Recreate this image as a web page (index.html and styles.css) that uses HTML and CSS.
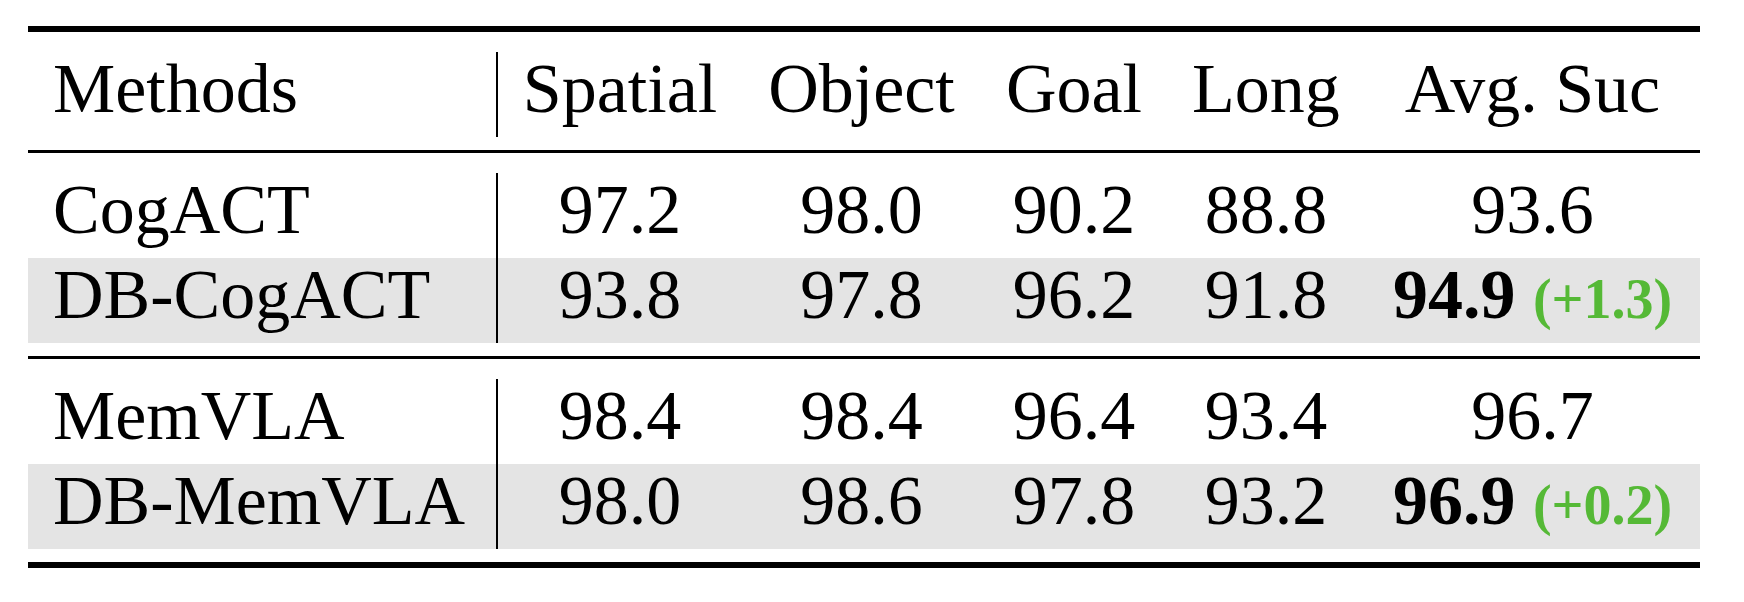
FILE: index.html
```html
<!DOCTYPE html>
<html lang="en">
<head>
    <meta charset="UTF-8">
    <title>Results</title>
    <link rel="stylesheet" href="styles.css">
</head>
<body>
    <div class="results">
        <div class="rule heavy"></div>
        <div class="head">
            <div class="row">
                <span class="name">Methods</span>
                <span>Spatial</span>
                <span>Object</span>
                <span>Goal</span>
                <span>Long</span>
                <span>Avg. Suc</span>
            </div>
        </div>
        <div class="rule"></div>
        <div class="group">
            <div class="row">
                <span class="name">CogACT</span>
                <span>97.2</span>
                <span>98.0</span>
                <span>90.2</span>
                <span>88.8</span>
                <span>93.6</span>
            </div>
            <div class="row shade">
                <span class="name">DB-CogACT</span>
                <span>93.8</span>
                <span>97.8</span>
                <span>96.2</span>
                <span>91.8</span>
                <span><b class="best">94.9</b> <b class="gain">(+1.3)</b></span>
            </div>
        </div>
        <div class="rule"></div>
        <div class="group">
            <div class="row">
                <span class="name">MemVLA</span>
                <span>98.4</span>
                <span>98.4</span>
                <span>96.4</span>
                <span>93.4</span>
                <span>96.7</span>
            </div>
            <div class="row shade">
                <span class="name">DB-MemVLA</span>
                <span>98.0</span>
                <span>98.6</span>
                <span>97.8</span>
                <span>93.2</span>
                <span><b class="best">96.9</b> <b class="gain">(+0.2)</b></span>
            </div>
        </div>
        <div class="rule heavy"></div>
    </div>
</body>
</html>
```

FILE: styles.css
```css
* {
    margin: 0;
    padding: 0;
    box-sizing: border-box;
}
body {
    background: #fff;
    color: #000;
    font-family: "Liberation Serif", "Times New Roman", serif;
}
.results {
    width: 1672px;
    margin: 26px 0 0 28px;
    font-size: 70px;
}
.rule {
    height: 3px;
    background: #000;
}
.rule.heavy {
    height: 6px;
}
.head, .group {
    margin: 20px 0 13px;
}
.row {
    display: grid;
    grid-template-columns: 470px 244px 239px 186px 198px 335px;
    height: 85px;
    line-height: 73px;
    white-space: nowrap;
}
.row span {
    text-align: center;
}
.row .name {
    text-align: left;
    padding-left: 25px;
    border-right: 2px solid #000;
}
.shade {
    background: #e4e4e4;
}
.best {
    font-weight: bold;
}
.gain {
    font-weight: bold;
    font-size: 56px;
    color: #55b936;
}
```
